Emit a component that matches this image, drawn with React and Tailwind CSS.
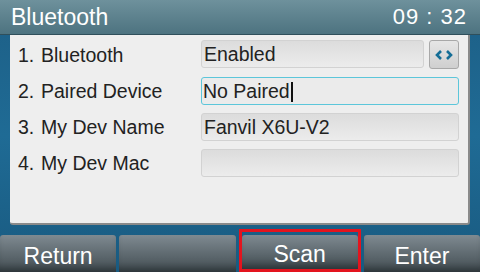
const rows = [
  { n: '1.', label: 'Bluetooth', value: 'Enabled', kind: 'select' },
  { n: '2.', label: 'Paired Device', value: 'No Paired', kind: 'focus' },
  { n: '3.', label: 'My Dev Name', value: 'Fanvil X6U-V2', kind: 'text' },
  { n: '4.', label: 'My Dev Mac', value: '', kind: 'text' },
];

const softkeys = ['Return', '', 'Scan', 'Enter'];

function Field({ row }) {
  if (row.kind === 'select') {
    return (
      <div className="flex flex-1 gap-[5px]">
        <div className="flex h-[28px] flex-1 items-center rounded-[3px] border border-[#d2d2d2] bg-gradient-to-b from-[#dcdcdc] to-[#ececec] px-[2px] pt-[2px] text-[19.5px] text-[#222]">
          {row.value}
        </div>
        <div className="flex h-[29px] w-[30px] items-center justify-center rounded-[3px] border border-[#a8a8a8] bg-gradient-to-b from-[#e6e6e6] to-[#cfcfcf]">
          <svg width="20" height="12" viewBox="0 0 20 12">
            <path d="M7 2 L3 6 L7 10" fill="none" stroke="#146d96" strokeWidth="2.6" />
            <path d="M13 2 L17 6 L13 10" fill="none" stroke="#146d96" strokeWidth="2.6" />
          </svg>
        </div>
      </div>
    );
  }
  if (row.kind === 'focus') {
    return (
      <div className="flex h-[28px] flex-1 items-center rounded-[3px] border border-[#5cc6da] bg-[#ebebeb] px-[1px] pt-[2px] text-[19.5px] text-[#222]">
        {row.value}
        <span className="ml-[1px] h-[20px] w-[2px] bg-[#111]" />
      </div>
    );
  }
  return (
    <div className="flex h-[28px] flex-1 items-center rounded-[3px] border border-[#d2d2d2] bg-gradient-to-b from-[#dcdcdc] to-[#ececec] px-[2px] pt-[2px] text-[19.5px] text-[#222]">
      {row.value}
    </div>
  );
}

export default function App() {
  return (
    <div
      className="flex h-[272px] w-[480px] flex-col overflow-hidden bg-gradient-to-b from-[#1d5f86] via-[#1f6b95] to-[#195a80]"
      style={{ fontFamily: '"Liberation Sans", Arial, sans-serif' }}
    >
      {/* Header */}
      <header className="flex h-[35px] items-center justify-between border-b border-[#2f4f5b] bg-gradient-to-b from-[#6e919c] to-[#4d7380] pl-[11px] pr-[13px] text-white">
        <span className="text-[23px] leading-none">Bluetooth</span>
        <span className="text-[22px] leading-none tracking-[1px]">09 : 32</span>
      </header>

      {/* Panel */}
      <div className="ml-[10px] mr-[10px] flex h-[190px] flex-col gap-[7px] rounded-b-[3px] border-b-2 border-r-2 border-[#8a8a8a] bg-[#eeeeee] pl-[8px] pr-[9px] pt-[5px]">
        {rows.map((row) => (
          <div key={row.n} className="flex h-[29px] items-center">
            <div className="flex w-[183px] items-center pt-[2px] text-[19.5px] text-[#222]">
              <span className="w-[23px]">{row.n}</span>
              <span>{row.label}</span>
            </div>
            <Field row={row} />
          </div>
        ))}
      </div>

      {/* Softkeys */}
      <div className="mt-auto flex h-[43px] items-end gap-[3px]">
        {softkeys.map((k, i) => (
          <div
            key={i}
            className={
              i === 2
                ? 'flex h-[43px] flex-1 border-[3px] border-[#e3141e] pt-[3px]'
                : 'flex h-[37px] flex-1'
            }
          >
            <div className="flex flex-1 items-center justify-center rounded-t-[3px] bg-gradient-to-b from-[#7f8a91] via-[#5a656b] via-60% to-[#4a5459] pt-[5px] text-[23px] text-white shadow-[inset_0_-10px_8px_-6px_rgba(20,26,30,0.6)]">
              {k}
            </div>
          </div>
        ))}
      </div>
    </div>
  );
}
